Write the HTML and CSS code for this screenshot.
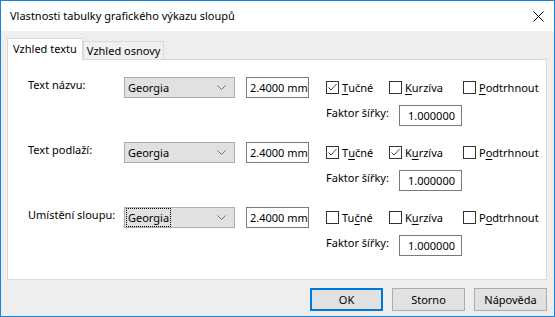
FILE: index.html
```html
<!DOCTYPE html>
<html lang="cs">
<head>
    <meta charset="UTF-8">
    <title>Vlastnosti tabulky grafického výkazu sloupů</title>
    <link rel="stylesheet" href="styles.css">
</head>
<body>
    <div class="window">
        <div class="titlebar">
            <span class="title">Vlastnosti tabulky grafického výkazu sloupů</span>
            <svg class="close" width="11" height="11" viewBox="0 0 11 11"><path d="M0.5 0.5L10.5 10.5M10.5 0.5L0.5 10.5" stroke="#000" stroke-width="1"/></svg>
        </div>
        <div class="content">
            <div class="tabs">
                <div class="tab active">Vzhled textu</div>
                <div class="tab">Vzhled osnovy</div>
            </div>
            <div class="panel">
                <div class="group">
                    <label class="name">Text názvu:</label>
                    <div class="select"><span>Georgia</span><svg width="9" height="5" viewBox="0 0 9 5"><path d="M0.5 0.5L4.5 4.5L8.5 0.5" fill="none" stroke="#707070"/></svg></div>
                    <div class="field">2.4000 mm</div>
                    <div class="checks">
                        <span class="check w1"><i class="box"><svg width="11" height="11" viewBox="0 0 11 11"><path d="M1.5 5.5L4 8L9.5 2" fill="none" stroke="#444"/></svg></i><u>T</u>učné</span>
                        <span class="check w2"><i class="box"></i><u>K</u>urzíva</span>
                        <span class="check"><i class="box"></i><u>P</u>odtrhnout</span>
                    </div>
                    <span class="factor">Faktor šířky:</span>
                    <div class="field short">1.000000</div>
                </div>
                <div class="group">
                    <label class="name">Text podlaží:</label>
                    <div class="select"><span>Georgia</span><svg width="9" height="5" viewBox="0 0 9 5"><path d="M0.5 0.5L4.5 4.5L8.5 0.5" fill="none" stroke="#707070"/></svg></div>
                    <div class="field">2.4000 mm</div>
                    <div class="checks">
                        <span class="check w1"><i class="box"><svg width="11" height="11" viewBox="0 0 11 11"><path d="M1.5 5.5L4 8L9.5 2" fill="none" stroke="#444"/></svg></i>T<u>u</u>čné</span>
                        <span class="check w2"><i class="box"><svg width="11" height="11" viewBox="0 0 11 11"><path d="M1.5 5.5L4 8L9.5 2" fill="none" stroke="#444"/></svg></i>K<u>u</u>rzíva</span>
                        <span class="check"><i class="box"></i>P<u>o</u>dtrhnout</span>
                    </div>
                    <span class="factor">Faktor šířky:</span>
                    <div class="field short">1.000000</div>
                </div>
                <div class="group">
                    <label class="name">Umístění sloupu:</label>
                    <div class="select focused"><span>Georgia</span><svg width="9" height="5" viewBox="0 0 9 5"><path d="M0.5 0.5L4.5 4.5L8.5 0.5" fill="none" stroke="#707070"/></svg></div>
                    <div class="field">2.4000 mm</div>
                    <div class="checks">
                        <span class="check w1"><i class="box"></i>Tu<u>č</u>né</span>
                        <span class="check w2"><i class="box"></i>K<u>u</u>rzíva</span>
                        <span class="check"><i class="box"></i>P<u>o</u>dtrhnout</span>
                    </div>
                    <span class="factor">Faktor šířky:</span>
                    <div class="field short">1.000000</div>
                </div>
            </div>
            <div class="buttons">
                <button class="btn default">OK</button>
                <button class="btn">Storno</button>
                <button class="btn">Nápověda</button>
            </div>
        </div>
    </div>
</body>
</html>
```

FILE: styles.css
```css
body{
    margin: 0;
    font-family: "Segoe UI", "Noto Sans", sans-serif;
    font-size: 11px;
    color: #000;
}
.window{
    width: 555px;
    height: 317px;
    box-sizing: border-box;
    border: 1px solid #1883d7;
    background: #eeeeee;
    display: flex;
    flex-direction: column;
}
.titlebar{
    height: 30px;
    background: #fff;
    display: flex;
    align-items: center;
    justify-content: space-between;
    padding: 0 10px 0 9px;
}
.title{
    font-size: 11px;
    margin-top: -1px;
}
.content{
    padding: 7px 7px 0 6px;
}
.tabs{
    display: flex;
    align-items: flex-end;
    height: 21px;
}
.tab{
    border: 1px solid #d9d9d9;
    border-bottom: none;
    background: #f0f0f0;
    height: 17px;
    line-height: 17px;
    padding: 0 3px;
}
.tab.active{
    background: #fff;
    height: 21px;
    line-height: 19px;
    padding: 0 5px;
    position: relative;
    z-index: 1;
    margin-bottom: -1px;
}
.panel{
    background: #fff;
    border: 1px solid #d9d9d9;
    height: 221px;
    padding: 17px 0 0 20px;
    box-sizing: border-box;
}
.group{
    display: grid;
    grid-template-columns: 96px 111px 74px 90px 1fr;
    grid-template-rows: 21px 21px;
    row-gap: 7px;
    height: 65px;
    align-items: center;
}
.name{
    grid-row: 1;
    align-self: start;
    line-height: 16px;
}
.select{
    height: 21px;
    box-sizing: border-box;
    border: 1px solid #adadad;
    background: #e1e1e1;
    display: flex;
    align-items: center;
    justify-content: space-between;
    padding: 0 8px 0 3px;
}
.select.focused span{
    outline: 1px dotted #000;
    outline-offset: 1px;
}
.field{
    height: 21px;
    box-sizing: border-box;
    border: 1px solid #7a7a7a;
    background: #fff;
    line-height: 19px;
    padding-left: 3px;
    margin-left: 11px;
    width: 63px;
    white-space: nowrap;
}
.checks{
    grid-column: 4 / 6;
    display: flex;
    margin-left: 17px;
}
.check{
    display: flex;
    align-items: center;
}
.check.w1{ width: 63px; }
.check.w2{ width: 74px; }
.check u{
    text-decoration-thickness: 1px;
    text-underline-offset: 2px;
}
.box{
    width: 13px;
    height: 13px;
    box-sizing: border-box;
    border: 1px solid #333;
    background: #fff;
    margin-right: 3px;
    display: flex;
}
.factor{
    grid-row: 2;
    grid-column: 4 / 5;
    margin-left: 17px;
    white-space: nowrap;
    align-self: start;
    line-height: 16px;
}
.field.short{
    grid-row: 2;
    grid-column: 5;
    margin-left: 0;
    padding-left: 8px;
}
.buttons{
    display: flex;
    justify-content: flex-end;
    gap: 9px;
    margin-top: 8px;
}
.btn{
    width: 73px;
    height: 23px;
    border: 1px solid #adadad;
    background: #e1e1e1;
    font: inherit;
    color: #000;
    padding: 0;
}
.btn.default{
    border: 2px solid #0078d7;
}
```
